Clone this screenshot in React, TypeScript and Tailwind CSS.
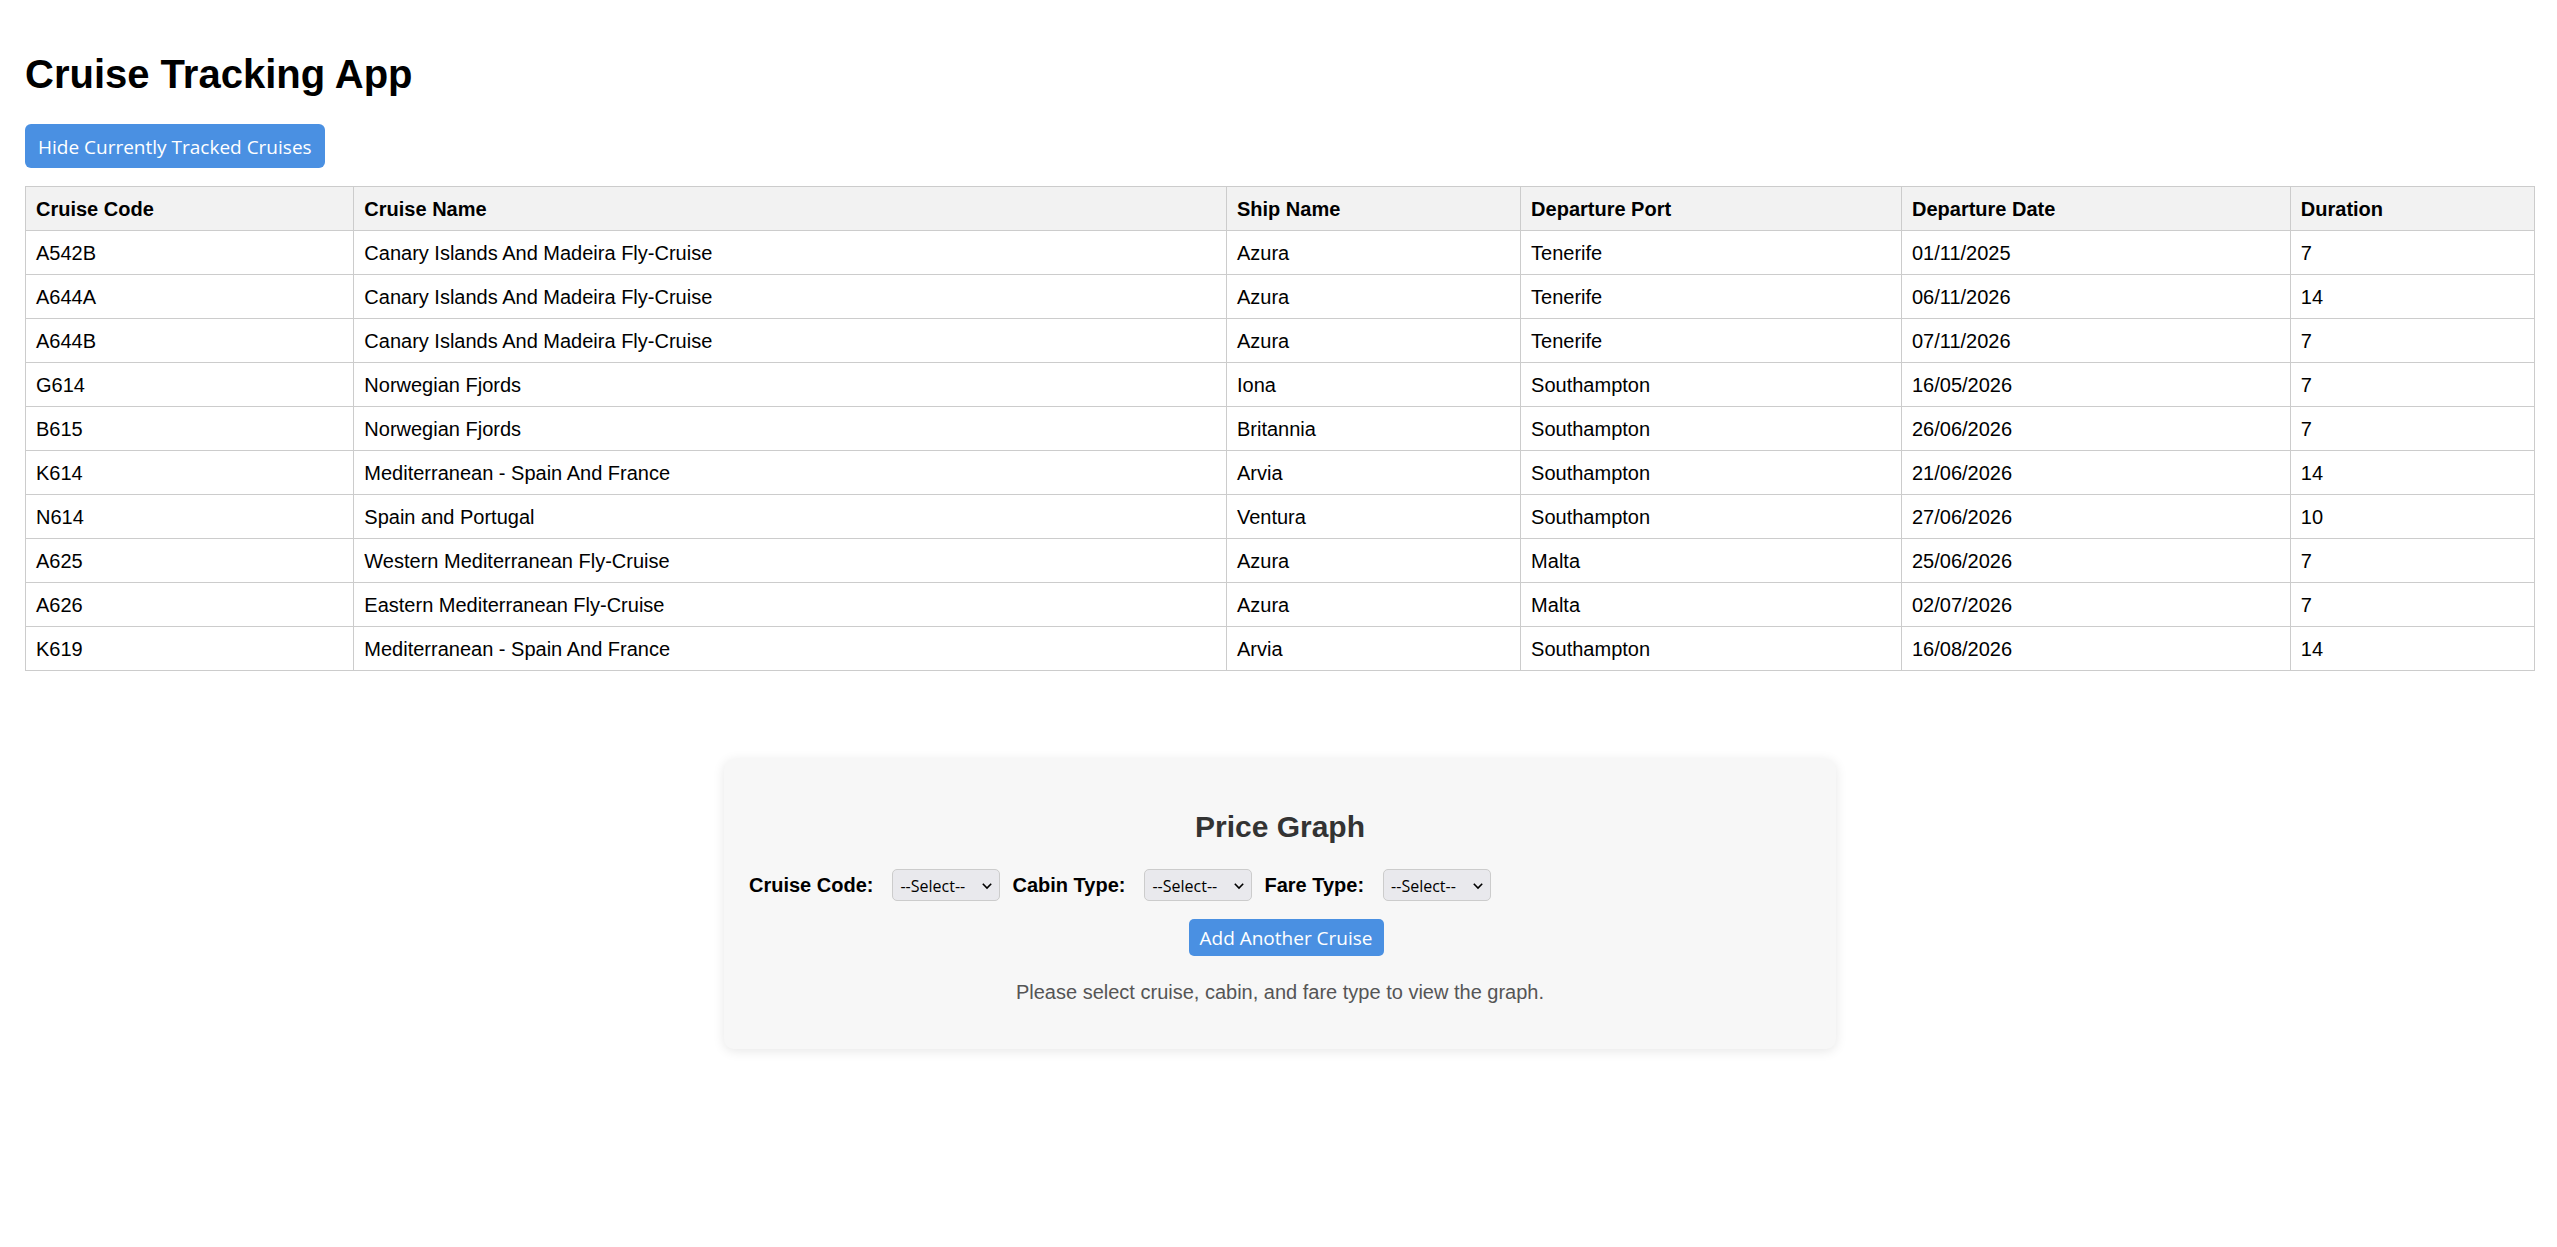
import { useState } from "react";

const columns = [
  "Cruise Code",
  "Cruise Name",
  "Ship Name",
  "Departure Port",
  "Departure Date",
  "Duration",
];

const cruises = [
  ["A542B", "Canary Islands And Madeira Fly-Cruise", "Azura", "Tenerife", "01/11/2025", "7"],
  ["A644A", "Canary Islands And Madeira Fly-Cruise", "Azura", "Tenerife", "06/11/2026", "14"],
  ["A644B", "Canary Islands And Madeira Fly-Cruise", "Azura", "Tenerife", "07/11/2026", "7"],
  ["G614", "Norwegian Fjords", "Iona", "Southampton", "16/05/2026", "7"],
  ["B615", "Norwegian Fjords", "Britannia", "Southampton", "26/06/2026", "7"],
  ["K614", "Mediterranean - Spain And France", "Arvia", "Southampton", "21/06/2026", "14"],
  ["N614", "Spain and Portugal", "Ventura", "Southampton", "27/06/2026", "10"],
  ["A625", "Western Mediterranean Fly-Cruise", "Azura", "Malta", "25/06/2026", "7"],
  ["A626", "Eastern Mediterranean Fly-Cruise", "Azura", "Malta", "02/07/2026", "7"],
  ["K619", "Mediterranean - Spain And France", "Arvia", "Southampton", "16/08/2026", "14"],
];

function CruiseTable() {
  return (
    <table className="w-full border-collapse text-left">
      <thead>
        <tr className="bg-[#f2f2f2]">
          {columns.map((c) => (
            <th key={c} scope="col" className="border border-[#cccccc] px-2.5 pt-[11px] pb-[9px] font-bold">
              {c}
            </th>
          ))}
        </tr>
      </thead>
      <tbody>
        {cruises.map((row) => (
          <tr key={row[0]}>
            {row.map((cell, i) => (
              <td key={i} className="border border-[#cccccc] px-2.5 pt-[11px] pb-[9px]">
                {cell}
              </td>
            ))}
          </tr>
        ))}
      </tbody>
    </table>
  );
}

function SelectField({ id, label, options }: { id: string; label: string; options: string[] }) {
  return (
    <div className="flex items-center gap-[19px]">
      <label htmlFor={id} className="font-bold">
        {label}
      </label>
      <div className="relative">
        <select
          id={id}
          className="block h-8 w-27 appearance-none rounded-[5px] border border-[#cccccc] bg-[#e9e9ed] pt-0.5 pl-[7px] font-['Open_Sans',sans-serif] text-[16px] leading-5 text-black"
        >
          <option value="">--Select--</option>
          {options.map((o) => (
            <option key={o}>{o}</option>
          ))}
        </select>
        <svg
          viewBox="0 0 10 7"
          className="pointer-events-none absolute top-3.5 right-2 h-[7px] w-2.5"
          fill="none"
          stroke="black"
          strokeWidth="1.6"
          aria-hidden="true"
        >
          <path d="M0.8 0.8 L5 5 L9.2 0.8" />
        </svg>
      </div>
    </div>
  );
}

export default function App() {
  const [shown, setShown] = useState(true);
  const [rows, setRows] = useState(1);

  return (
    <main className="bg-white pt-[51px] pr-[22px] pb-6 pl-[25px] font-['Liberation_Sans',Arial,sans-serif] text-[20px] leading-[23px] text-black">
      <h1 className="mb-[27px] text-[40px] leading-[46px] font-bold">Cruise Tracking App</h1>
      <button
        type="button"
        onClick={() => setShown(!shown)}
        className="mb-[18px] block h-11 rounded-md bg-[#4a90e2] px-[13px] pt-0.5 font-['Open_Sans',sans-serif] text-[19px] text-white"
      >
        {shown ? "Hide" : "Show"} Currently Tracked Cruises
      </button>
      {shown && <CruiseTable />}

      <section className="mx-auto mt-[88px] max-w-[1112px] rounded-[10px] bg-[#f7f7f7] px-[25px] pt-[50px] pb-[45px] shadow-[0_2px_12px_rgba(0,0,0,0.1)]">
        <h2 className="mb-[25px] text-center text-[30px] leading-[35px] font-bold text-[#333333]">
          Price Graph
        </h2>
        {Array.from({ length: rows }, (_, i) => (
          <div key={i} className="mb-[18px] flex flex-wrap items-center gap-3">
            <SelectField id={`cruise-${i}`} label="Cruise Code:" options={cruises.map((c) => c[0])} />
            <SelectField id={`cabin-${i}`} label="Cabin Type:" options={["Inside", "Balcony"]} />
            <SelectField id={`fare-${i}`} label="Fare Type:" options={["Early", "Select"]} />
          </div>
        ))}
        <div className="mb-[25px] flex justify-center pl-3">
          <button
            type="button"
            onClick={() => setRows(rows + 1)}
            className="h-[37px] rounded-[5px] bg-[#4a90e2] px-[11px] pt-0.5 font-['Open_Sans',sans-serif] text-[19px] text-white"
          >
            Add Another Cruise
          </button>
        </div>
        <p className="text-center text-[#555555]">
          Please select cruise, cabin, and fare type to view the graph.
        </p>
      </section>
    </main>
  );
}
